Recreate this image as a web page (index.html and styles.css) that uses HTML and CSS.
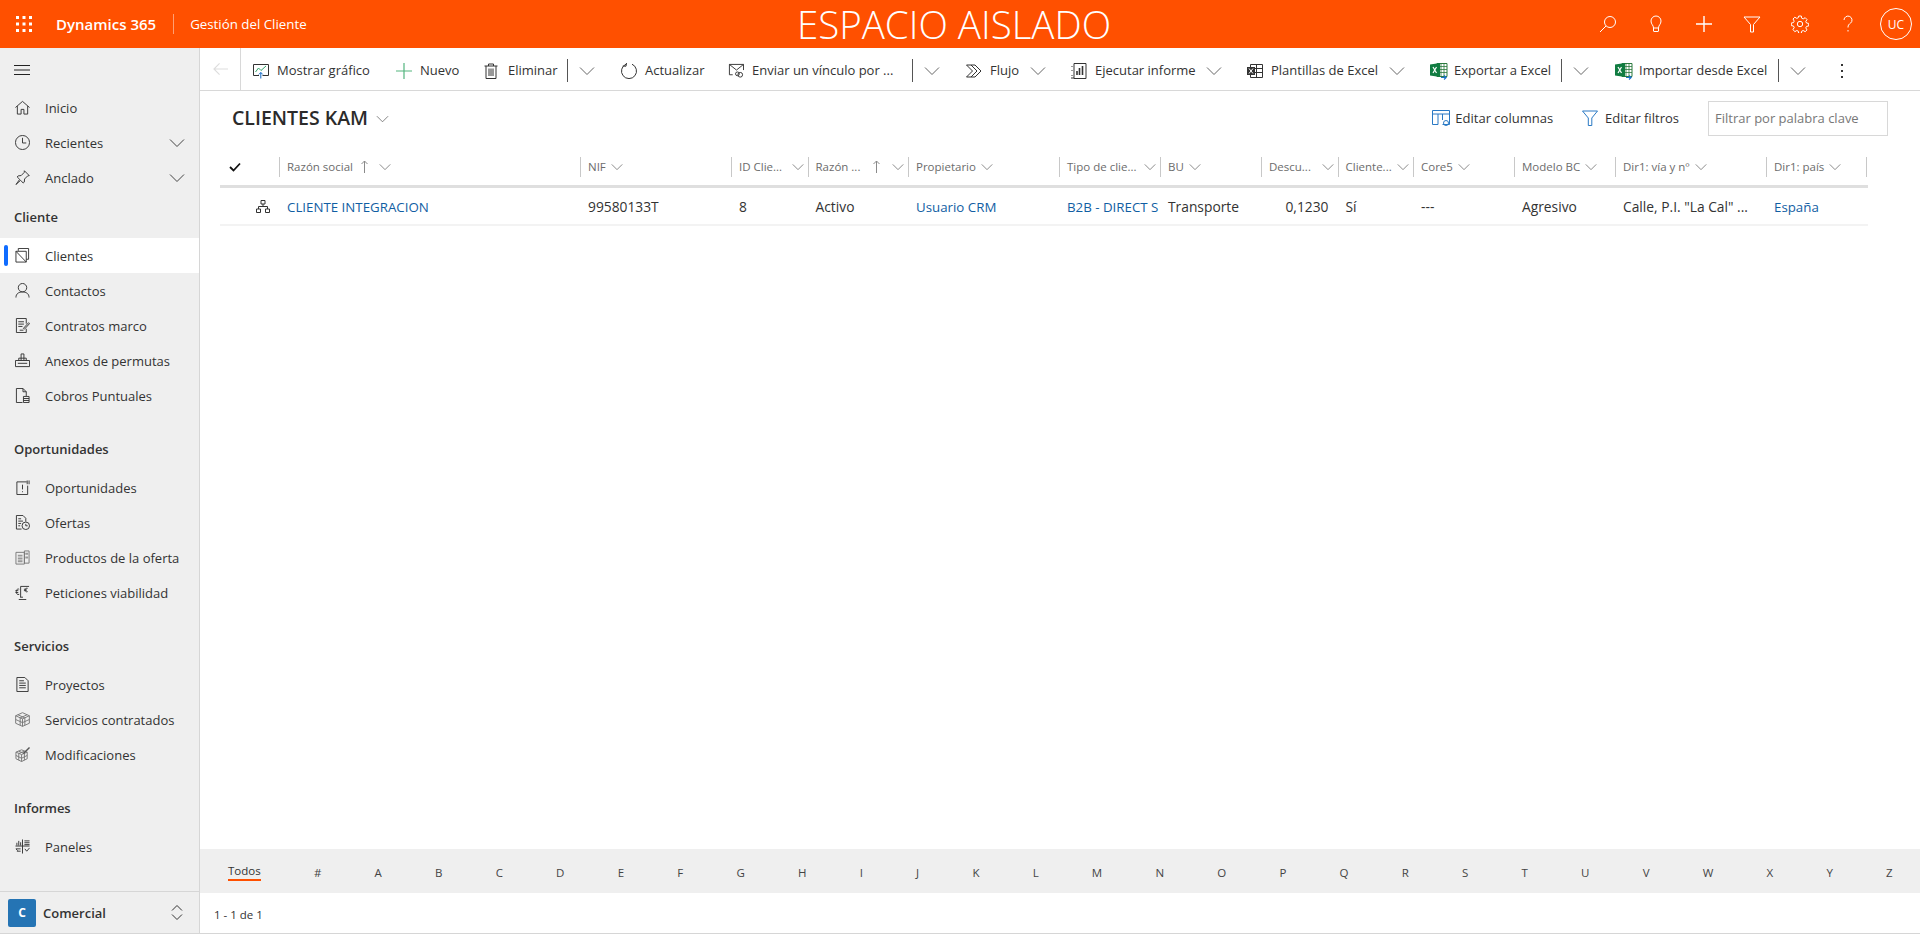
FILE: index.html
```html
<!DOCTYPE html>
<html lang="es">
<head>
<meta charset="utf-8">
<title>Clientes KAM</title>
<link rel="stylesheet" href="styles.css">
</head>
<body>
<svg class="defs" width="0" height="0" aria-hidden="true">
  <symbol id="chev" viewBox="0 0 16 10"><path d="M1 1.500 8 8.500 15 1.500" fill="none" stroke="currentColor" stroke-width="1"/></symbol>
  <symbol id="up" viewBox="0 0 7 13"><path d="M3.500 13V1M.5 4l3-3 3 3" fill="none" stroke="currentColor" stroke-width="1"/></symbol>
  <symbol id="xl" viewBox="0 0 18 18">
    <path d="M7 1.500h10v13H7z" fill="#fff" stroke="#2c7a3f"/>
    <path d="M11 1.500v13M14 1.500v13M7 4.500h10M7 7.500h10M7 10.500h10" stroke="#2c7a3f" stroke-width=".8" fill="none"/>
    <path d="M0 2.500 10 1v14L0 13.500z" fill="#107c41"/>
    <path d="M3 5l3.500 6M6.500 5 3 11" stroke="#fff" stroke-width="1.200" fill="none"/>
    <path d="M11 15.500h5M14 13.500l2.200 2-2.200 2" stroke="#1a73c7" stroke-width="1.100" fill="none"/>
  </symbol>
</svg>

<header class="topbar">
  <div class="top-left">
    <svg class="waffle" viewBox="0 0 16 16" width="16" height="16"><path fill="#fff" d="M0 0h3v3H0zM6.500 0h3v3h-3zM13 0h3v3h-3zM0 6.500h3v3H0zM6.500 6.500h3v3h-3zM13 6.500h3v3h-3zM0 13h3v3H0zM6.500 13h3v3h-3zM13 13h3v3h-3z"/></svg>
    <span class="brand">Dynamics 365</span>
    <span class="app">Gestión del Cliente</span>
  </div>
  <div class="sandbox">ESPACIO AISLADO</div>
  <div class="top-right">
    <svg class="ti" viewBox="0 0 18 18"><circle cx="11" cy="7" r="5.500"/><path d="M7 11 1 17"/></svg>
    <svg class="ti" viewBox="0 0 18 18"><path d="M6.500 13c0-3-2.500-3.500-2.500-7a5 5 0 0 1 10 0c0 3.500-2.500 4-2.500 7zM7 16.500h4M6.500 13v3.500M11.500 13v3.500"/></svg>
    <svg class="ti" viewBox="0 0 18 18"><path d="M9 1v16M1 9h16" stroke-width="1.400"/></svg>
    <svg class="ti" viewBox="0 0 18 18"><path d="M1 2h16l-6.500 7.500V17h-3V9.500z"/></svg>
    <svg class="ti" viewBox="0 0 18 18"><circle cx="9" cy="9" r="2.700"/><path d="M7.700 1h2.600l.4 2.200 1.500.7 2-1.200 1.800 1.800-1.200 2 .7 1.500 2.200.4v2.600l-2.200.4-.7 1.500 1.200 2-1.800 1.800-2-1.200-1.500.7-.4 2.200H7.700l-.4-2.200-1.500-.7-2 1.200L2 14.500l1.200-2-.7-1.500-2.200-.4V8l2.200-.4.7-1.500L2 4l1.800-1.800 2 1.200 1.500-.7z"/></svg>
    <svg class="ti" viewBox="0 0 18 18"><path d="M5 5a4 4 0 1 1 6.500 3.200C10 9.300 9 10 9 12.500"/><path d="M9 15v1.500"/></svg>
    <span class="avatar">UC</span>
  </div>
</header>

<div class="shell">
  <nav class="side">
    <div class="side-scroll">
      <div class="burger"><svg width="16" height="10" viewBox="0 0 16 10"><path d="M0 .5h16M0 5h16M0 9.500h16" stroke="#222" fill="none"/></svg></div>
      <ul class="nav-list">
        <li class="nav-item"><svg class="ni" viewBox="0 0 16 16"><path d="M.5 8 8 1.500 15.500 8M2.500 6.500v8.500h4v-5h3v5h4V6.500"/></svg><span>Inicio</span></li>
        <li class="nav-item"><svg class="ni" viewBox="0 0 16 16"><circle cx="8" cy="8" r="7.500"/><path d="M8 3v5.500h4"/></svg><span>Recientes</span><svg class="nav-chev"><use href="#chev"/></svg></li>
        <li class="nav-item"><svg class="ni" viewBox="0 0 16 16"><path d="M10 .8 15.200 6l-1.700.3-3.300 3.300-.3 3.300-1.200 1L6 11 1 15.500 5 10 2.300 7.400l1-1.100 3.300-.4 3.200-3.300z"/></svg><span>Anclado</span><svg class="nav-chev"><use href="#chev"/></svg></li>
      </ul>
      <h3 class="nav-head">Cliente</h3>
      <ul class="nav-list">
        <li class="nav-item is-active"><svg class="ni" viewBox="0 0 16 16"><path d="M3.500 3V.5h11V12H12M1 3.500h11V15H1zM1 3.500 12 15"/></svg><span>Clientes</span></li>
        <li class="nav-item"><svg class="ni" viewBox="0 0 16 16"><circle cx="8" cy="5" r="4.500"/><path d="M1 15.500c0-4 3-6 7-6s7 2 7 6"/></svg><span>Contactos</span></li>
        <li class="nav-item"><svg class="ni" viewBox="0 0 16 16"><path d="M12 6V.5H1.500v15H12v-4M3.500 4h6M3.500 6.500h6M3.500 9h4.500M5 13h4M9 11l5.500-6 1 1L10 12z"/></svg><span>Contratos marco</span></li>
        <li class="nav-item"><svg class="ni" viewBox="0 0 16 16"><path d="M.5 8h15v6.500H.5zM6.500 8V1h3v7M4 8V5.500h8V8M3 11h10"/></svg><span>Anexos de permutas</span></li>
        <li class="nav-item"><svg class="ni" viewBox="0 0 16 16"><path d="M8 15.500H1.500V.5h7l3.500 3.500v4.500M8.500.5V4H12"/><path d="M9 9h6v6.500H9zM9 11.200h6M9 13.300h6"/></svg><span>Cobros Puntuales</span></li>
      </ul>
      <h3 class="nav-head nav-head-gap">Oportunidades</h3>
      <ul class="nav-list">
        <li class="nav-item"><svg class="ni" viewBox="0 0 16 16"><path d="M12.500 2H2v13.500h11.500V6M13 .5v4M15 .5v4M8 5v5M8 12v1"/></svg><span>Oportunidades</span></li>
        <li class="nav-item"><svg class="ni" viewBox="0 0 16 16"><path d="M7 15H1.500V.5h7l3 3V7M3.500 4h3M3.500 6.500h5M3.500 9h3M3.500 11.500h2"/><circle cx="11.500" cy="11.500" r="4"/><path d="M11.500 9.500v2h2"/></svg><span>Ofertas</span></li>
        <li class="nav-item"><svg class="ni ni-soft" viewBox="0 0 16 16"><path d="M1 2.500h9v12.500H1zM10 1h5v13h-5z"/><path class="fillsoft" d="M3 5h5v2H3zM3 8h5v2H3zM3 11h5v2H3zM11 3h3v2h-3zM11 7h3v2h-3z"/></svg><span>Productos de la oferta</span></li>
        <li class="nav-item"><svg class="ni" viewBox="0 0 16 16"><path d="M6 1.500h9M6 1.500V13M4 15.500h8M5.500 13h3M4.500 4.500C2 3.500 1 6 1.500 8M.5 6h3M.5 8h3M4.500 10C2.500 10.500 1.500 9.500 1.500 8M13.500 3.500c-2-.5-3 1-2.500 2.500s1.500 1.500 2.500 1M9.500 4.500h3M9.500 6h3"/></svg><span>Peticiones viabilidad</span></li>
      </ul>
      <h3 class="nav-head nav-head-gap">Servicios</h3>
      <ul class="nav-list">
        <li class="nav-item"><svg class="ni" viewBox="0 0 16 16"><path d="M2 .5h8.500l3.500 3.500v11.500H2zM4.500 4h5M4.500 6.500h7M4.500 9h7M4.500 11.500h7"/></svg><span>Proyectos</span></li>
        <li class="nav-item"><svg class="ni ni-soft" viewBox="0 0 16 16"><path d="M8 .7 15.300 4v8L8 15.300.7 12V4zM.7 4 8 7.300 15.300 4M8 7.300v8M3 2.900l7.500 3.400v7.800M13 2.900 5.500 6.300v7.800M.7 8 8 11.300 15.300 8"/></svg><span>Servicios contratados</span></li>
        <li class="nav-item"><svg class="ni ni-soft" viewBox="0 0 16 16"><path d="M7 3 13 5.500v7L7 15.500 1 12.500v-7zM1 5.500 7 8l6-2.500M7 8v7.500M4 4.500l6 2.500v7M10 4.500 4 7v7M1 9l6 3 6-3"/><path class="stroke-dark" d="M9 7 15.500.5"/></svg><span>Modificaciones</span></li>
      </ul>
      <h3 class="nav-head nav-head-gap">Informes</h3>
      <ul class="nav-list">
        <li class="nav-item"><svg class="ni" viewBox="0 0 16 16"><path d="M8 .5v15M.5 7.500h15M2 7V4M4 7V2M6 7V3.500M10 2h5.500M10 4h5.500M10 6h5.500M1 10.500h5M1 10.500l2 2M6 13H2M10.500 10.500l2 2.500 3-3.500"/></svg><span>Paneles</span></li>
      </ul>
    </div>
    <div class="switcher">
      <span class="area-tile">C</span>
      <span class="area-name">Comercial</span>
      <svg class="updown" viewBox="0 0 12 17"><path d="M1 6.500 6 1.500l5 5M1 10.500l5 5 5-5"/></svg>
    </div>
  </nav>

  <main class="main">
    <div class="cmdbar">
      <div class="cmd cmd-back"><svg class="back" viewBox="0 0 16 14"><path d="M7 1 1 7l6 6M1 7h15"/></svg></div>
      <div class="cmd"><svg class="ci" viewBox="0 0 16 16"><path d="M.5 1.500h15v11H9.500M6 12.500H.5v-11" stroke="#333"/><path d="M2.500 9 5.500 5l2.500 2.500L13 3" stroke="#2ea36a"/><path d="M7.800 15.500V9.500M5.800 11.500l2-2 2 2" stroke="#1169c7"/></svg><span>Mostrar gráfico</span></div>
      <div class="cmd"><svg class="ci" viewBox="0 0 16 16"><path d="M8 0v16M0 8h16" stroke="#54b57f" stroke-width="1.200"/></svg><span>Nuevo</span></div>
      <div class="cmd cmd-sep"><svg class="ci" viewBox="0 0 16 16"><path d="M.5 3h13M4.500 3V1h5v2M2 3v12.500h10V3M5 5.500v7.500M7 5.500v7.500M9 5.500v7.500"/></svg><span>Eliminar</span></div>
      <div class="cmd cmd-drop"><svg class="chev"><use href="#chev"/></svg></div>
      <div class="cmd"><svg class="ci" viewBox="0 0 16 16"><path d="M11 1.200a7.500 7.500 0 1 1-6 0M5.500 0 5 3.200 1.800 3"/></svg><span>Actualizar</span></div>
      <div class="cmd cmd-sep"><svg class="ci" viewBox="0 0 17 15"><path d="M5 11.500H1.500V.5h15v6M1.500.5 9 6.500l7.500-6"/><circle cx="10" cy="10.500" r="2"/><circle cx="13" cy="11.500" r="2.500"/></svg><span>Enviar un vínculo por ...</span></div>
      <div class="cmd cmd-drop"><svg class="chev"><use href="#chev"/></svg></div>
      <div class="cmd"><svg class="ci" viewBox="0 0 16 14"><path d="M.5 1H9l6 6-6 6H.5l6-6zM5 1l6 6-6 6"/></svg><span>Flujo</span><svg class="chev chev-end"><use href="#chev"/></svg></div>
      <div class="cmd"><svg class="ci" viewBox="0 0 16 16"><path d="M3 .5h12v15H3zM1 3v1M1 7v1M1 12v1M0 15h3"/><path d="M6 12V8M8.500 12V5M11.500 12V3" stroke-width="1.600"/></svg><span>Ejecutar informe</span><svg class="chev chev-end"><use href="#chev"/></svg></div>
      <div class="cmd"><svg class="ci" viewBox="0 0 16 16"><path d="M3.500 1.500h12v13h-12zM3.500 5.500h12M3.500 9.500h12M9.500 1.500v13"/><path d="M0 4h8v8H0z" fill="#333" stroke="none"/><path d="M2 5.500l4 5M6 5.500l-4 5" stroke="#fff"/></svg><span>Plantillas de Excel</span><svg class="chev chev-end"><use href="#chev"/></svg></div>
      <div class="cmd cmd-sep"><svg class="cx"><use href="#xl"/></svg><span>Exportar a Excel</span></div>
      <div class="cmd cmd-drop"><svg class="chev"><use href="#chev"/></svg></div>
      <div class="cmd cmd-sep"><svg class="cx"><use href="#xl"/></svg><span>Importar desde Excel</span></div>
      <div class="cmd cmd-drop"><svg class="chev"><use href="#chev"/></svg></div>
      <div class="cmd cmd-more"><svg viewBox="0 0 4 16" width="4" height="16"><path fill="#333" d="M1 1h2v2H1zM1 7h2v2H1zM1 13h2v2H1z"/></svg></div>
    </div>

    <div class="view">
      <div class="view-head">
        <h1 class="view-title">CLIENTES KAM</h1>
        <svg class="chev title-chev"><use href="#chev"/></svg>
        <div class="view-tools">
          <div class="tool tool-cols"><svg class="ci" viewBox="0 0 18 17"><path d="M.5.500h17v14h-7M6 14.500H.5V.5M.5 4h17M6 4v10.500M10.500 4v6" stroke="#2a79c4"/><circle cx="14" cy="13" r="2.500" stroke="#2a79c4"/></svg><span>Editar columnas</span></div>
          <div class="tool tool-filter"><svg class="ci" viewBox="0 0 16 16"><path d="M.5 1h15L9.800 8v7.500H6.300V8z" stroke="#2a79c4"/></svg><span>Editar filtros</span></div>
          <div class="filter-box">Filtrar por palabra clave</div>
        </div>
      </div>

      <div class="grid-wrap">
        <div class="grid-row grid-header">
          <div class="th th-check"><svg viewBox="0 0 12 10" width="12" height="10"><path d="M1 5l3.500 3.500L11 1.500" fill="none" stroke="#111" stroke-width="1.800"/></svg></div>
          <div class="th"><span class="lbl">Razón social</span><svg class="sort"><use href="#up"/></svg><svg class="hchev hchev-sorted"><use href="#chev"/></svg></div>
          <div class="th"><span class="lbl">NIF</span><svg class="hchev hchev-near"><use href="#chev"/></svg></div>
          <div class="th"><span class="lbl">ID Clie...</span><svg class="hchev"><use href="#chev"/></svg></div>
          <div class="th"><span class="lbl">Razón ...</span><svg class="sort sort-wide"><use href="#up"/></svg><svg class="hchev"><use href="#chev"/></svg></div>
          <div class="th"><span class="lbl">Propietario</span><svg class="hchev hchev-near"><use href="#chev"/></svg></div>
          <div class="th"><span class="lbl">Tipo de clie...</span><svg class="hchev"><use href="#chev"/></svg></div>
          <div class="th"><span class="lbl">BU</span><svg class="hchev hchev-near"><use href="#chev"/></svg></div>
          <div class="th"><span class="lbl">Descu...</span><svg class="hchev"><use href="#chev"/></svg></div>
          <div class="th"><span class="lbl">Cliente...</span><svg class="hchev"><use href="#chev"/></svg></div>
          <div class="th"><span class="lbl">Core5</span><svg class="hchev hchev-near"><use href="#chev"/></svg></div>
          <div class="th"><span class="lbl">Modelo BC</span><svg class="hchev hchev-near"><use href="#chev"/></svg></div>
          <div class="th"><span class="lbl">Dir1: vía y nº</span><svg class="hchev hchev-near"><use href="#chev"/></svg></div>
          <div class="th th-last"><span class="lbl">Dir1: país</span><svg class="hchev hchev-near"><use href="#chev"/></svg></div>
        </div>
        <div class="grid-row grid-data">
          <div class="td td-icon"><svg viewBox="0 0 14 13" width="14" height="13"><path d="M5 .5h4v3.500H5zM.5 9h4v3.500h-4zM9.500 9h4v3.500h-4zM7 4v2.500M2.500 9V6.500h9V9" fill="none" stroke="#333"/></svg></div>
          <div class="td"><a class="link">CLIENTE INTEGRACION</a></div>
          <div class="td">99580133T</div>
          <div class="td">8</div>
          <div class="td">Activo</div>
          <div class="td"><a class="link">Usuario CRM</a></div>
          <div class="td td-clip"><a class="link">B2B - DIRECT S</a></div>
          <div class="td">Transporte</div>
          <div class="td td-num">0,1230</div>
          <div class="td">Sí</div>
          <div class="td">---</div>
          <div class="td">Agresivo</div>
          <div class="td">Calle, P.I. "La Cal" ...</div>
          <div class="td"><a class="link">España</a></div>
        </div>
      </div>
    </div>

    <div class="alpha">
      <span class="alpha-all">Todos</span><span>#</span><span>A</span><span>B</span><span>C</span><span>D</span><span>E</span><span>F</span><span>G</span><span>H</span><span>I</span><span>J</span><span>K</span><span>L</span><span>M</span><span>N</span><span>O</span><span>P</span><span>Q</span><span>R</span><span>S</span><span>T</span><span>U</span><span>V</span><span>W</span><span>X</span><span>Y</span><span>Z</span>
    </div>
    <div class="pager">1 - 1 de 1</div>
  </main>
</div>
</body>
</html>
```
FILE: styles.css
```css
* { box-sizing: border-box; }
html, body { margin: 0; height: 100%; }
body {
  height: 934px;
  overflow: hidden;
  display: flex;
  flex-direction: column;
  font-family: "Open Sans", "Noto Sans", sans-serif;
  font-size: 13px;
  color: #333;
  background: #fff;
}
.defs { position: absolute; }

/* top bar */
.topbar {
  height: 48px;
  flex: none;
  background: #ff5000;
  color: #fff;
  display: grid;
  grid-template-columns: 1fr auto 1fr;
  align-items: center;
}
.top-left { display: flex; align-items: center; padding-left: 16px; }
.brand { margin-left: 24px; font-size: 15px; font-weight: 600; padding-right: 17px; border-right: 1px solid rgba(255,255,255,.45); line-height: 20px; }
.app { margin-left: 16px; font-size: 13.300px; }
.sandbox { font-size: 38.500px; font-weight: 300; line-height: 48px; margin-right: 12px; }
.top-right { display: flex; align-items: center; justify-content: flex-end; padding-right: 8px; gap: 30px; }
.ti { width: 18px; height: 18px; fill: none; stroke: #fff; stroke-width: 1; }
.avatar {
  width: 32px; height: 32px; border: 1px solid #fff; border-radius: 50%;
  display: flex; align-items: center; justify-content: center;
  font-size: 12px; margin-left: -7px;
}

.shell { flex: 1; display: flex; min-height: 0; border-bottom: 1px solid #d6d6d6; }

/* sidebar */
.side {
  width: 200px; flex: none;
  background: #efefef;
  border-right: 1px solid #d6d6d6;
  display: flex; flex-direction: column;
}
.side-scroll { flex: 1; min-height: 0; }
.burger { height: 42px; padding: 17px 0 0 14px; line-height: 0; }
.nav-list { list-style: none; margin: 0; padding: 0; }
.nav-item {
  height: 35px;
  display: flex; align-items: center;
  padding-left: 15px;
  position: relative;
  font-size: 13px;
}
.nav-item > span { margin-left: 15px; }
.ni { width: 15px; height: 15px; fill: none; stroke: #333; stroke-width: 1; flex: none; }
.ni-soft { stroke: #777; }
.ni-soft .fillsoft { fill: #999; stroke: none; }
.ni-soft .stroke-dark { stroke: #555; stroke-width: 1.500; }
.nav-chev { width: 16px; height: 10px; position: absolute; right: 14px; top: 13px; color: #444; }
.nav-item.is-active { background: #fff; }
.nav-item.is-active::before {
  content: ""; position: absolute; left: 4px; top: 7px;
  width: 4px; height: 21px; background: #0f6cff; border-radius: 2px;
}
.nav-head {
  margin: 0; height: 43px;
  padding: 13px 0 0 14px;
  font-size: 13px; font-weight: 600; line-height: 18px;
}
.nav-head-gap { height: 57px; padding-top: 27px; }

.switcher {
  height: 42px; flex: none;
  border-top: 1px solid #d6d6d6;
  display: flex; align-items: center;
  padding-left: 8px; position: relative;
}
.area-tile {
  width: 28px; height: 28px; background: #2574b4; color: #fff; border-radius: 2px;
  display: flex; align-items: center; justify-content: center;
  font-size: 12px; font-weight: 700;
}
.area-name { margin-left: 7px; font-size: 13px; font-weight: 600; }
.updown { width: 12px; height: 17px; position: absolute; right: 16px; top: 12px; fill: none; stroke: #333; stroke-width: 1; }

/* main */
.main { flex: 1; min-width: 0; display: flex; flex-direction: column; }

.cmdbar {
  height: 43px; flex: none;
  border-bottom: 1px solid #d8d8d8;
  display: grid;
  grid-template-columns: 41px 143px 88px 96px 41px 107px 197px 41px 105px 176px 183px 144px 41px 176px 41px 44px;
  align-items: center;
  padding-top: 3px;
}
.cmd { display: flex; align-items: center; padding-left: 12px; height: 23px; font-size: 13px; white-space: nowrap; min-width: 0; }
.cmd > span { margin-left: 8px; margin-top: -2px; }
.cmd-back { height: 42px; margin-top: -3px; border-right: 1px solid #d8d8d8; padding-left: 13px; }
.back { width: 15px; height: 14px; fill: none; stroke: #ddd; stroke-width: 1.200; }
.cmd-sep { border-right: 1px solid #555; }
.cmd-drop { padding-left: 11px; }
.cmd-more { padding-left: 20px; }
.chev { width: 16px; height: 10px; color: #666; flex: none; }
.chev-end { margin-left: auto; margin-right: 13px; }
.ci { width: 16px; height: 16px; flex: none; fill: none; stroke: #333; stroke-width: 1; }
.cx { width: 18px; height: 18px; flex: none; }
.cmd > .cx + span { margin-left: 6px; }

/* view */
.view { flex: 1; min-height: 0; padding: 0 32px 0 20px; display: flex; flex-direction: column; }
.view-head { height: 57px; flex: none; display: flex; align-items: center; padding: 0 0 3px 12px; }
.view-title { margin: 0; font-size: 19.500px; font-weight: 600; line-height: 24px; color: #2b2b2b; }
.title-chev { margin-left: 8px; margin-top: 1px; width: 13px; height: 8px; }
.view-tools { margin-left: auto; display: flex; align-items: center; }
.tool { display: flex; align-items: center; font-size: 13px; white-space: nowrap; }
.tool > span { margin-left: 7px; }
.tool-cols { margin-right: 29px; }
.tool-cols .ci { width: 18px; height: 17px; }
.tool-cols > span { margin-left: 5px; }
.tool-filter { margin-right: 29px; }
.filter-box {
  width: 180px; height: 35px; border: 1px solid #d8d8d8;
  padding: 0 6px; display: flex; align-items: center;
  font-size: 13px; color: #777; white-space: nowrap;
}

.grid-wrap { flex: none; width: 1648px; }
.grid-row {
  display: grid;
  grid-template-columns: 59px 301px 151px 76.500px 100.500px 151px 101px 101px 76.500px 75.500px 101px 101px 151px 101px;
}
.grid-header { height: 40px; border-bottom: 3px solid #dfdfdf; align-items: center; }
.th {
  height: 20px; display: flex; align-items: center;
  border-left: 1px solid #c8c8c8;
  padding-left: 7px; padding-right: 3px;
  font-size: 11.500px; color: #6c6c6c; white-space: nowrap; min-width: 0;
}
.th-check { border-left: 0; padding-left: 9px; }
.th-last { border-right: 1px solid #c8c8c8; }
.sort { width: 7px; height: 13px; margin-left: 8px; color: #8a8a8a; flex: none; }
.sort-wide { margin-left: 13px; }
.hchev { width: 12px; height: 8px; margin-left: auto; margin-right: 1px; color: #666; flex: none; }
.hchev-near { margin-left: 5px; }
.hchev-sorted { margin-left: 11px; }
.grid-data { height: 38px; border-bottom: 2px solid #f3f3f3; align-items: center; }
.td { padding-left: 8px; font-size: 13.800px; white-space: nowrap; min-width: 0; color: #333; }
.td-icon { padding-left: 36px; line-height: 0; }
.td-clip { overflow: hidden; }
.td-num { text-align: right; padding-right: 9px; }
.link { color: #115ea3; font-size: 13.300px; }

/* alphabet + pager */
.alpha {
  height: 44px; flex: none;
  background: #efefef;
  display: flex; align-items: center; justify-content: space-between;
  padding: 2px 27px 0 28px;
  font-size: 11.500px;
  color: #444;
}
.alpha-all { border-bottom: 2px solid #ff5000; line-height: 16px; padding-bottom: 0; color: #333; }
.pager { height: 40px; flex: none; display: flex; align-items: center; padding: 2px 0 0 14px; font-size: 11.500px; }
```
